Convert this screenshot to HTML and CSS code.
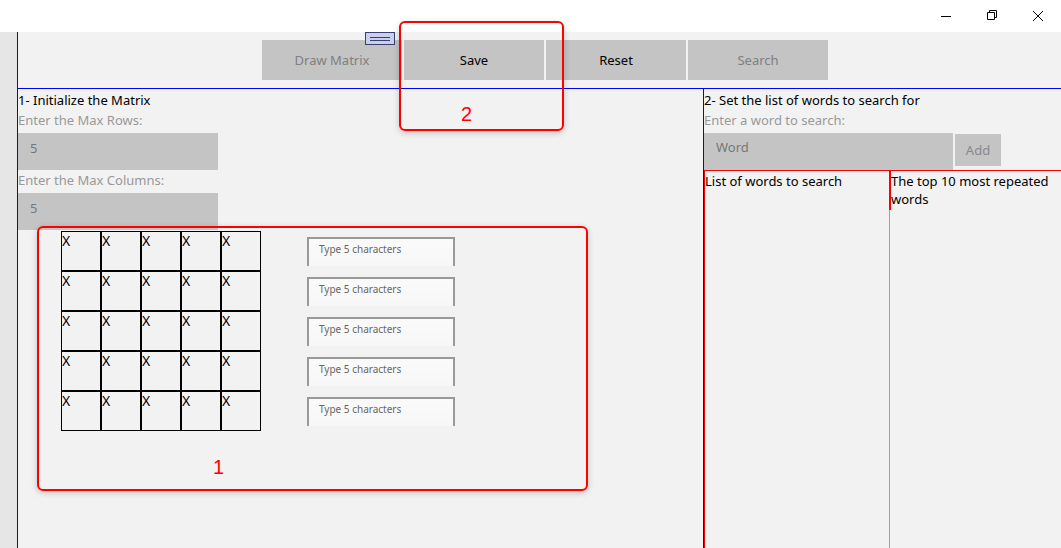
FILE: index.html
```html
<!DOCTYPE html>
<html>
<head>
<meta charset="utf-8">
<link rel="stylesheet" href="styles.css">
</head>
<body>
<div class="titlebar">
  <div class="winbtn"><svg width="12" height="12" viewBox="0 0 12 12"><path d="M1 6.5H11" stroke="#000" stroke-width="1"/></svg></div>
  <div class="winbtn"><svg width="12" height="12" viewBox="0 0 12 12"><path d="M3.5 0.5H10.5V7.5H8.5M1.5 2.5H8.5V9.5H1.5Z M3.5 2.5V0.5" fill="none" stroke="#000" stroke-width="1"/></svg></div>
  <div class="winbtn"><svg width="12" height="12" viewBox="0 0 12 12"><path d="M1 1L11 11M11 1L1 11" stroke="#000" stroke-width="1"/></svg></div>
</div>
<div class="window">
  <div class="strip"></div>
  <div class="main">
    <div class="toolbar">
      <div class="tbtn disabled">Draw Matrix</div>
      <div class="tbtn">Save</div>
      <div class="tbtn">Reset</div>
      <div class="tbtn disabled">Search</div>
    </div>
    <div class="content">
      <div class="left">
        <div class="heading">1- Initialize the Matrix</div>
        <div class="label">Enter the Max Rows:</div>
        <div class="field">5</div>
        <div class="label">Enter the Max Columns:</div>
        <div class="field">5</div>
        <div class="matrix-area">
          <div class="grid">
            <div class="cell">X</div><div class="cell">X</div><div class="cell">X</div><div class="cell">X</div><div class="cell">X</div>
            <div class="cell">X</div><div class="cell">X</div><div class="cell">X</div><div class="cell">X</div><div class="cell">X</div>
            <div class="cell">X</div><div class="cell">X</div><div class="cell">X</div><div class="cell">X</div><div class="cell">X</div>
            <div class="cell">X</div><div class="cell">X</div><div class="cell">X</div><div class="cell">X</div><div class="cell">X</div>
            <div class="cell">X</div><div class="cell">X</div><div class="cell">X</div><div class="cell">X</div><div class="cell">X</div>
          </div>
          <div class="rows">
            <div class="rowinput">Type 5 characters</div>
            <div class="rowinput">Type 5 characters</div>
            <div class="rowinput">Type 5 characters</div>
            <div class="rowinput">Type 5 characters</div>
            <div class="rowinput">Type 5 characters</div>
          </div>
        </div>
      </div>
      <div class="right">
        <div class="heading">2- Set the list of words to search for</div>
        <div class="label">Enter a word to search:</div>
        <div class="wordrow">
          <div class="field word">Word</div>
          <div class="addbtn">Add</div>
        </div>
        <div class="lists">
          <div class="col col1"><div class="colhead">List of words to search</div></div>
          <div class="col col2"><div class="colhead head2">The top 10 most repeated words</div></div>
        </div>
      </div>
    </div>
    <div class="grip"><span></span></div>
  </div>
</div>
<div class="note note1"><span>1</span></div>
<div class="note note2"><span>2</span></div>
</body>
</html>
```
FILE: styles.css
```css
html, body {
  margin: 0;
  padding: 0;
}
body {
  width: 1061px;
  height: 548px;
  overflow: hidden;
  position: relative;
  font-family: "Noto Sans", "Open Sans", sans-serif;
  font-size: 13px;
  color: #000;
  background: #f2f2f2;
}
.titlebar {
  height: 32px;
  background: #fff;
  display: flex;
  justify-content: flex-end;
}
.winbtn {
  width: 46px;
  height: 32px;
  display: flex;
  align-items: center;
  justify-content: center;
}
.winbtn svg { display: block; }
.window {
  display: flex;
  height: 516px;
}
.strip {
  width: 17px;
  background: #e6e6e6;
}
.main {
  flex: 1;
  border-left: 1px solid #0000ff;
  background: #f2f2f2;
  display: flex;
  flex-direction: column;
  position: relative;
}
.toolbar {
  height: 48px;
  padding-top: 8px;
  padding-left: 244px;
  display: flex;
  gap: 2px;
  border-bottom: 1px solid #0000ff;
  box-sizing: content-box;
}
.tbtn {
  width: 140px;
  height: 40px;
  background: #c4c4c4;
  display: flex;
  align-items: center;
  justify-content: center;
  font-size: 13px;
  color: #000;
}
.tbtn.disabled { color: #7f7f7f; }
.content {
  flex: 1;
  display: flex;
}
.left {
  width: 685px;
  border-right: 1px solid #0000ff;
}
.right {
  flex: 1;
  display: flex;
  flex-direction: column;
}
.heading {
  height: 20px;
  line-height: 20px;
  margin-top: 1px;
  white-space: nowrap;
}
.label {
  height: 20px;
  line-height: 20px;
  color: #999;
  white-space: nowrap;
}
.field {
  width: 200px;
  height: 37px;
  margin-top: 3px;
  background: #c4c4c4;
  color: #777;
  box-sizing: border-box;
  padding: 6px 0 0 12px;
  line-height: 18px;
}
.matrix-area {
  display: flex;
  margin: 1px 0 0 43px;
  gap: 46px;
}
.grid {
  display: grid;
  grid-template-columns: repeat(5, 40px);
  grid-auto-rows: 40px;
  width: 200px;
}
.cell {
  border: 1px solid #000;
  font-size: 14px;
  line-height: 18px;
  padding-left: 0;
  box-sizing: border-box;
}
.rows {
  display: flex;
  flex-direction: column;
  gap: 11px;
  padding-top: 6px;
}
.rowinput {
  width: 148px;
  height: 29px;
  box-sizing: border-box;
  border: 2px solid #999;
  border-bottom: none;
  background: linear-gradient(#fafafa, #f7f7f7);
  font-size: 10px;
  color: #666;
  padding: 3px 0 0 10px;
  line-height: 14px;
}
.wordrow {
  display: flex;
  align-items: flex-start;
}
.field.word {
  width: 249px;
  padding-top: 5px;
}
.addbtn {
  width: 46px;
  height: 32px;
  margin: 4px 0 0 2px;
  background: #c4c4c4;
  color: #888;
  display: flex;
  align-items: center;
  justify-content: center;
}
.lists {
  flex: 1;
  display: flex;
  border-top: 1px solid #ff0000;
  border-left: 1px solid #ff0000;
}
.col1 { width: 184px; }
.col2 {
  flex: 1;
  border-left: 1px solid #f08080;
}
.colhead {
  height: 39px;
  line-height: 18px;
  padding-top: 1px;
  box-sizing: border-box;
}
.head2 {
  margin-left: -1px;
  border-left: 2px solid #ff0000;
  padding-right: 4px;
}
.grip {
  position: absolute;
  left: 347px;
  top: 0;
  width: 28px;
  height: 11px;
  background: #c8d0ee;
  border: 1px solid #3a4170;
  display: flex;
  align-items: center;
  justify-content: center;
}
.grip span {
  width: 20px;
  height: 2px;
  border-top: 1px solid #3a4170;
  border-bottom: 1px solid #3a4170;
}
.note {
  position: absolute;
  border: 2px solid #ff0000;
  border-radius: 6px;
  box-shadow: 0 2px 6px rgba(0,0,0,0.2);
  color: #ff0000;
  font-family: "Liberation Sans", Arial, sans-serif;
  font-size: 20px;
  box-sizing: border-box;
}
.note span { position: absolute; }
.note1 {
  left: 37px;
  top: 226px;
  width: 551px;
  height: 265px;
}
.note1 span { left: 174px; top: 228px; }
.note2 {
  left: 399px;
  top: 21px;
  width: 165px;
  height: 110px;
}
.note2 span { left: 60px; top: 80px; }
```
